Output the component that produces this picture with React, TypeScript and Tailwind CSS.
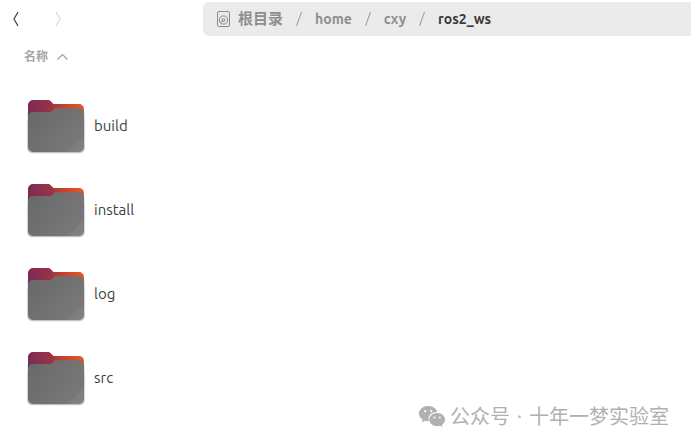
import { Fragment } from 'react';

const folders = ['build', 'install', 'log', 'src'];
const parents = ['home', 'cxy'];

function FolderIcon({ id }: { id: string }) {
  return (
    <svg className="h-[60px] w-[60px] shrink-0" viewBox="0 0 60 60" aria-hidden="true">
      <defs>
        <linearGradient id={`${id}-back`} x1="2" y1="18" x2="58" y2="8" gradientUnits="userSpaceOnUse">
          <stop offset="0" stopColor="#77285a" />
          <stop offset="0.2" stopColor="#8b2f4d" />
          <stop offset="0.42" stopColor="#973345" />
          <stop offset="0.55" stopColor="#b83d35" />
          <stop offset="1" stopColor="#ea5827" />
        </linearGradient>
        <linearGradient id={`${id}-front`} x1="2" y1="14" x2="58" y2="56" gradientUnits="userSpaceOnUse">
          <stop offset="0" stopColor="#686868" />
          <stop offset="1" stopColor="#7b7b7b" />
        </linearGradient>
      </defs>
      <rect x="1" y="14" width="58" height="43.500" rx="5" fill="#000" opacity="0.1" />
      <rect x="1.500" y="20" width="57" height="37" rx="5" fill="#000" opacity="0.15" />
      <path
        d="M2 9a5 5 0 0 1 5-5h14.500c1.500 0 2.500.4 3.500 1.500L27.500 8H53a5 5 0 0 1 5 5v30H2z"
        fill={`url(#${id}-back)`}
      />
      <path
        d="M2 20.500a4.500 4.500 0 0 1 4.500-4.500h16.500c1.500 0 2.300-.4 3.200-1.300l1.200-1.200c.8-.9 1.600-1.300 3.100-1.300H53a5 5 0 0 1 5 4.800v34a5 5 0 0 1-5 5H7a5 5 0 0 1-5-5z"
        fill={`url(#${id}-front)`}
      />
      <path d="M58 40v11a5 5 0 0 1-5 5H42z" fill="#fff" opacity="0.05" />
    </svg>
  );
}

function DiskIcon() {
  return (
    <svg className="h-4 w-[14px] shrink-0" viewBox="0 0 14 16" fill="none" stroke="#8b8b8b" aria-hidden="true">
      <rect x="0.500" y="0.500" width="12" height="15" rx="1.500" />
      <circle cx="6.500" cy="9" r="4.100" />
      <circle cx="6.500" cy="9" r="1.500" />
      <path d="M6.500 9 3.500 12" />
    </svg>
  );
}

function Separator() {
  return (
    <svg className="mx-3 h-4 w-2 shrink-0" viewBox="0 0 8 16" fill="none" stroke="#989898" aria-hidden="true">
      <path d="M6.500 1 1.500 15" />
    </svg>
  );
}

function WechatIcon() {
  return (
    <svg className="h-[22px] w-[27px] shrink-0" viewBox="0 0 27 22" fill="#b0b0b0" aria-hidden="true">
      <path d="M9.200 0C4.100 0 0 3.400 0 7.600c0 2.500 1.400 4.600 3.600 6L2.700 16.500l3.400-1.700c1.100.3 2 .5 3.100.5h.9c-1.900-5.100 2-9.200 7.900-9.200h.3C17.400 2.500 13.700 0 9.200 0z" />
      <path d="M18.200 6.900c-4.400 0-7.900 2.900-7.900 6.600s3.500 6.700 7.900 6.700c1 0 1.900-.2 2.800-.4l2.600 1.500-.7-2.400c1.900-1.300 3.100-3.200 3.100-5.400 0-3.700-3.500-6.600-7.800-6.600z" />
      <g fill="#fff">
        <circle cx="6.200" cy="5.200" r="1.100" />
        <circle cx="12.300" cy="5.200" r="1.100" />
        <circle cx="15.600" cy="11.400" r="1" />
        <circle cx="20.800" cy="11.400" r="1" />
      </g>
    </svg>
  );
}

export default function App() {
  return (
    <div className="relative min-h-screen bg-white font-[Ubuntu,'Open_Sans','Noto_Sans_CJK_SC',sans-serif] text-[#3d3d3d]">
      <header className="flex items-center pt-[2px]">
        <div className="flex w-[203px] shrink-0 gap-4 pl-[6px]">
          <button type="button" aria-label="后退" className="flex h-[34px] w-5 items-center justify-center">
            <svg className="h-4 w-[6px]" viewBox="0 0 6 16" fill="none" stroke="#3d3d3d" strokeWidth="1.200">
              <path d="M5 1 1 8l4 7" />
            </svg>
          </button>
          <button type="button" aria-label="前进" disabled className="flex h-[34px] w-8 items-center justify-center">
            <svg className="h-4 w-[6px]" viewBox="0 0 6 16" fill="none" stroke="#dadada" strokeWidth="1.200">
              <path d="m1 1 4 7-4 7" />
            </svg>
          </button>
        </div>
        <nav
          aria-label="路径"
          className="flex h-[34px] flex-1 items-center rounded-l-md bg-[#ebebeb] pl-[14px] text-[14px] font-bold text-[#8e8e8e]"
        >
          <a href="#root" className="flex items-center gap-[7px]">
            <DiskIcon />
            <span className="text-[15px]">根目录</span>
          </a>
          {parents.map((name) => (
            <Fragment key={name}>
              <Separator />
              <a href={`#${name}`}>{name}</a>
            </Fragment>
          ))}
          <Separator />
          <a href="#ros2_ws" aria-current="page" className="text-[#3a3a3a]">
            ros2_ws
          </a>
        </nav>
      </header>
      <main>
        <button type="button" className="flex h-[42px] items-center gap-[9px] pl-6 text-[12px] font-bold text-[#a5a5a5]">
          名称
          <svg className="h-[6px] w-[11px]" viewBox="0 0 11 6" fill="none" stroke="#a0a0a0" strokeWidth="1.200">
            <path d="m.5 5.500 5-5 5 5" />
          </svg>
        </button>
        <ul className="pt-[6px]">
          {folders.map((name) => (
            <li key={name} className="flex h-[84px] items-center gap-2 pl-[26px] text-[15px]">
              <FolderIcon id={name} />
              <span>{name}</span>
            </li>
          ))}
        </ul>
      </main>
      <div className="absolute right-[22px] bottom-[13px] flex items-center gap-1 text-[20px] whitespace-pre text-[#b0b0b0]">
        <WechatIcon />
        <span className="font-['DejaVu_Sans','Noto_Sans_CJK_SC',sans-serif]">公众号 · 十年一梦实验室</span>
      </div>
    </div>
  );
}
